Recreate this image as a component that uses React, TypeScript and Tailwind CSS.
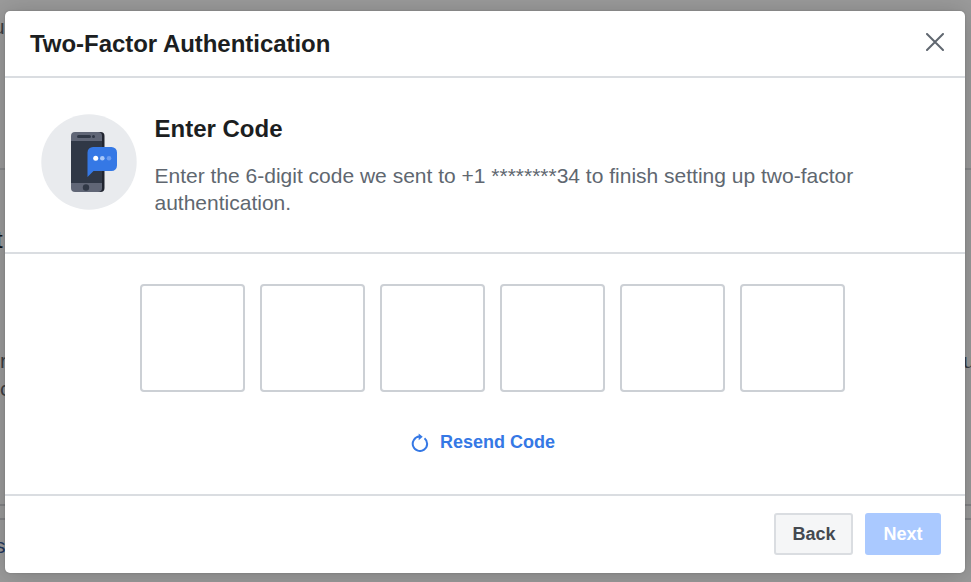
import React from "react";

function PhoneIllustration() {
  return (
    <svg className="block h-24 w-24 shrink-0" viewBox="0 0 96 96">
      <circle cx="48" cy="48" r="47.7" fill="#e9ebee" />
      <rect x="33" y="18" width="30.500" height="60" rx="4" fill="#20242f" />
      <rect x="30" y="18" width="31" height="60" rx="4" fill="#606676" />
      <rect x="30" y="27" width="31" height="42" fill="#303846" />
      <rect x="36" y="21" width="14" height="3" rx="1.5" fill="#303846" />
      <circle cx="52.5" cy="22.5" r="1.5" fill="#303846" />
      <circle cx="45" cy="73.5" r="3.200" fill="#303846" />
      <path
        d="M52 33h18.500a5.5 5.5 0 0 1 5.500 5.500v13a5.500 5.500 0 0 1-5.500 5.500H52.500L46.500 63V38.500A5.500 5.500 0 0 1 52 33z"
        fill="#3578e5"
      />
      <circle cx="54.700" cy="44.300" r="2.500" fill="#fff" />
      <circle cx="61.300" cy="44.300" r="2.300" fill="#a9c7f7" />
      <circle cx="68" cy="44.300" r="2.300" fill="#6a9cf0" />
    </svg>
  );
}

// Slivers of the dimmed page that remain visible around the dialog.
function Backdrop() {
  return (
    <div className="absolute inset-0 overflow-hidden bg-[#9b9b9b] text-[21px] leading-[27px] text-[#3b3e43]">
      <div className="absolute inset-x-0 top-[168px] h-0.5 bg-[#88898b]" />
      <div className="absolute inset-x-0 top-[504px] h-0.5 bg-[#838486]" />
      <div className="absolute inset-x-0 top-[518px] h-0.5 bg-[#838486]" />
      <span className="absolute -left-[7px] top-[13px]">u</span>
      <span className="absolute -left-[4px] top-[226px] text-[24px] text-[#111216]">t</span>
      <span className="absolute left-0 top-[347px]">r</span>
      <span className="absolute left-0 top-[375px]">c</span>
      <span className="absolute -left-[5px] top-[532px] text-[#22375e]">s</span>
      <span className="absolute left-[963px] top-[347px]">u</span>
    </div>
  );
}

export default function App() {
  return (
    <div className="relative h-[582px] w-[971px] overflow-hidden px-[5px] pt-[11px] font-['Liberation_Sans',Arial,sans-serif]">
      <Backdrop />
      <div
        role="dialog"
        className="relative flex h-[562px] w-[960px] flex-col rounded-[5px] bg-white shadow-[0_2px_26px_rgba(0,0,0,0.2),0_0_2px_rgba(0,0,0,0.2)]"
      >
        <header className="flex h-[67px] items-center justify-between border-b-2 border-[#dadde1] pl-[25px] pr-[21px]">
          <h1 className="text-2xl font-bold tracking-[-0.04px] text-[#1c1e21]">Two-Factor Authentication</h1>
          <button aria-label="Close" className="-mt-[3px]">
            <svg className="block h-[18px] w-[18px]" viewBox="0 0 18 18" fill="none" stroke="#606770" strokeWidth="2" strokeLinecap="round">
              <path d="M1 1l16 16M17 1L1 17" />
            </svg>
          </button>
        </header>
        <section className="flex h-[176px] border-b-2 border-[#dadde1] pl-9 pt-9">
          <PhoneIllustration />
          <div className="ml-[17.5px]">
            <h2 className="text-2xl leading-[30px] font-bold text-[#1c1e21]">Enter Code</h2>
            <p className="mt-[18px] w-[730px] text-[21px] leading-[27px] text-[#606770]">
              Enter the 6-digit code we sent to +1 ********34 to finish setting up two-factor authentication.
            </p>
          </div>
        </section>
        <section className="h-[242px] border-b-2 border-[#dadde1] pt-[30px]">
          <div className="flex gap-[15px] pl-[135px]">
            {[0, 1, 2, 3, 4, 5].map((i) => (
              <input key={i} aria-label={`Digit ${i + 1}`} className="block h-[108px] w-[105px] rounded-[4px] border-2 border-[#ccd0d5] bg-white" />
            ))}
          </div>
          <button className="mt-[38px] ml-[406px] flex h-6 items-center text-lg leading-6 font-bold text-[#3578e5]">
            <svg className="mr-[11px] block h-[20px] w-[18px]" viewBox="0 0 18 20" fill="none">
              <path d="M13.500 6.200A7.200 7.200 0 1 1 8.300 4.600" stroke="#3578e5" strokeWidth="2" />
              <path d="M7.700 1.500L11.700 4.800L7.700 8.200z" fill="#3578e5" />
            </svg>
            Resend Code
          </button>
        </section>
        <footer className="flex flex-1 items-start justify-end gap-3 pr-6 pt-[17px]">
          <button className="h-[42px] w-[79px] rounded-[3px] border-2 border-[#dadde1] bg-[#f5f6f7] pl-px text-lg font-bold text-[#444950]">
            Back
          </button>
          <button className="h-[42px] w-[76px] rounded-[3px] bg-[#aac9ff] text-lg font-bold text-white">Next</button>
        </footer>
      </div>
    </div>
  );
}
